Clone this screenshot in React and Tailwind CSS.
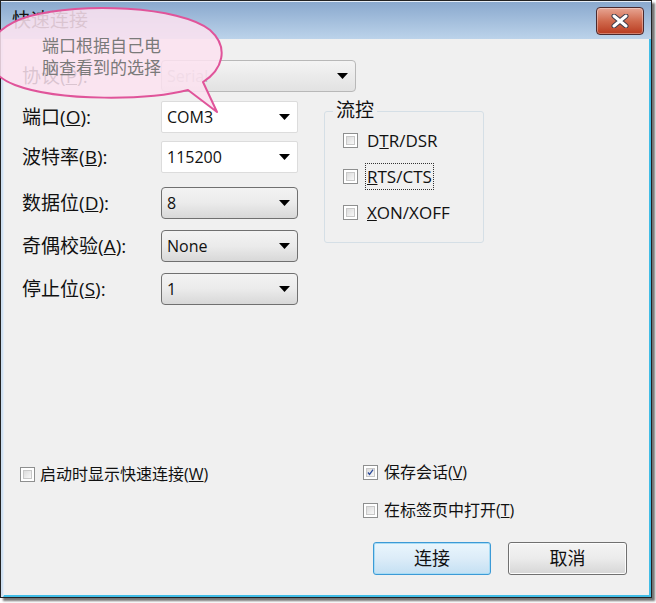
import React from 'react';

const FONT = { fontFamily: '"Open Sans", "Noto Sans CJK SC", sans-serif' };

function Arrow() {
  return (
    <svg width="11" height="6" viewBox="0 0 11 6" className="shrink-0">
      <path d="M0 0h11L5.5 6z" fill="#000" />
    </svg>
  );
}

function Combo({ value, variant = 'button', width = 'w-[137px]' }) {
  const styles = {
    edit: 'bg-white border border-[#dcdcdc] rounded-[2px] text-[#111]',
    button: 'bg-gradient-to-b from-[#f3f3f3] via-[#ebebeb] to-[#d8d8d8] border border-[#707070] rounded-[4px] text-[#111]',
    disabled: 'bg-gradient-to-b from-[#f4f4f4] to-[#e2e2e2] border border-[#b8b8b8] rounded-[4px] text-[#b0b0b0]',
  };
  return (
    <div className={`${width} h-[32px] flex items-center justify-between pl-[5px] pr-[7px] text-[16px] ${styles[variant]}`}>
      <span>{value}</span>
      <Arrow />
    </div>
  );
}

function Label({ text, hot, className = '' }) {
  return (
    <span className={`text-[19px] leading-[26px] text-[#111] ${className}`}>
      {text}(<span className="underline">{hot}</span>):
    </span>
  );
}

function CheckBox({ checked }) {
  return (
    <div className="w-[15px] h-[15px] border border-[#8e8f8f] bg-white p-[2px] shrink-0">
      <div className="w-full h-full bg-gradient-to-br from-[#dcdcdc] to-[#f8f8f8] border border-[#c8c8c8] flex items-center justify-center">
        {checked && (
          <svg width="11" height="11" viewBox="0 0 11 11">
            <path d="M1.5 5.5l2.5 3 5.5-7.5" stroke="#2c4a9a" strokeWidth="2" fill="none" />
          </svg>
        )}
      </div>
    </div>
  );
}

function Row({ label, hot, value, variant, mt }) {
  return (
    <div className={`flex items-center ${mt}`}>
      <Label text={label} hot={hot} className="w-[139px]" />
      <Combo value={value} variant={variant} />
    </div>
  );
}

export default function App() {
  return (
    <div className="relative w-[656px] h-[603px] bg-white" style={FONT}>
      <div className="w-[652px] h-[598px] border border-[#222] flex flex-col shadow-[3px_3px_2px_rgba(0,0,0,0.55)] bg-[#cfe0f1]">
        {/* title bar */}
        <div className="h-[38px] flex items-center justify-between pl-[11px] pr-[7px] bg-gradient-to-b from-[#8aa9ce] to-[#bcd3ea] border-t border-[#e6eef7]">
          <span className="text-[19px] text-[#111]">快速连接</span>
          <div className="w-[48px] h-[28px] rounded-[4px] border border-[#4b2a2e] bg-gradient-to-b from-[#e7a593] via-[#d06a4e] to-[#b8391d] flex items-center justify-center shadow-[inset_0_0_0_1px_rgba(255,255,255,0.35)]">
            <svg width="20" height="14" viewBox="0 0 20 14">
              <path d="M4 2l12 10M16 2L4 12" stroke="#3b3b4a" strokeWidth="5" strokeLinecap="round" />
              <path d="M4 2l12 10M16 2L4 12" stroke="#fff" strokeWidth="3" strokeLinecap="round" />
            </svg>
          </div>
        </div>

        {/* client area */}
        <div className="flex-1 bg-[#f0f0f0] ml-[2px] border-l border-[#e2ecf6] border-r-2 border-b-2 border-r-[#41bde6] border-b-[#41bde6] flex flex-col pl-[18px] pr-[22px] pt-[21px] pb-[20px]">
          <div className="flex items-center">
            <Label text="协议" hot="P" className="w-[139px]" />
            <Combo value="Serial" variant="disabled" width="w-[195px]" />
          </div>

          <div className="flex">
            <div className="flex flex-col">
              <Row label="端口" hot="O" value="COM3" variant="edit" mt="mt-[9px]" />
              <Row label="波特率" hot="B" value="115200" variant="edit" mt="mt-[8px]" />
              <Row label="数据位" hot="D" value="8" variant="button" mt="mt-[14px]" />
              <Row label="奇偶校验" hot="A" value="None" variant="button" mt="mt-[11px]" />
              <Row label="停止位" hot="S" value="1" variant="button" mt="mt-[11px]" />
            </div>

            <div className="relative ml-[26px] mt-[19px] w-[160px] h-[132px] border border-[#d5dfe6] rounded-[3px] pl-[18px] pt-[21px]">
              <span className="absolute -top-[14px] left-[8px] px-[3px] bg-[#f0f0f0] text-[19px] text-[#111] leading-[24px]">流控</span>
              <div className="flex flex-col gap-[21px] text-[17px] text-[#111]">
                <div className="flex items-center gap-[9px] h-[15px]">
                  <CheckBox />
                  <span>D<span className="underline">T</span>R/DSR</span>
                </div>
                <div className="flex items-center gap-[8px] h-[15px]">
                  <CheckBox />
                  <span className="outline outline-1 outline-dotted outline-[#333] px-[1px]"><span className="underline">R</span>TS/CTS</span>
                </div>
                <div className="flex items-center gap-[9px] h-[15px]">
                  <CheckBox />
                  <span><span className="underline">X</span>ON/XOFF</span>
                </div>
              </div>
            </div>
          </div>

          <div className="flex-1" />

          <div className="flex">
            <div className="w-[343px] flex items-start pt-[2px] -ml-[2px]">
              <div className="flex items-center gap-[5px] text-[16px] text-[#111]">
                <CheckBox />
                <span>启动时显示快速连接(<span className="underline">W</span>)</span>
              </div>
            </div>
            <div className="flex flex-col">
              <div className="flex items-center gap-[6px] text-[16px] text-[#111]">
                <CheckBox checked />
                <span>保存会话(<span className="underline">V</span>)</span>
              </div>
              <div className="flex items-center gap-[6px] text-[16px] text-[#111] mt-[14px]">
                <CheckBox />
                <span>在标签页中打开(<span className="underline">T</span>)</span>
              </div>
              <div className="flex gap-[17px] mt-[20px] ml-[10px]">
                <button className="w-[118px] h-[33px] rounded-[3px] border border-[#3c9ad6] bg-gradient-to-b from-[#eaf6fd] via-[#dcecf8] to-[#c4e0f3] text-[18px] text-[#111] shadow-[inset_0_0_0_1px_#a8dcf5]">连接</button>
                <button className="w-[119px] h-[33px] rounded-[3px] border border-[#707070] bg-gradient-to-b from-[#f4f4f4] via-[#ebebeb] to-[#d6d6d6] text-[18px] text-[#111] shadow-[inset_0_0_0_1px_#fcfcfc]">取消</button>
              </div>
            </div>
          </div>
        </div>
      </div>

      {/* callout bubble */}
      <div className="absolute left-0 top-0 pointer-events-none">
        <svg width="230" height="120" viewBox="0 0 230 120" className="absolute left-0 top-0">
          <path
            d="M188 90 C 150 100, 60 102, 15 85 C -25 70, -20 30, 30 16 C 80 2, 180 6, 210 30 C 230 48, 222 70, 203 82 L 217 112 Z"
            fill="rgba(251,226,240,0.86)"
            stroke="#e0549a"
            strokeWidth="2"
            strokeLinejoin="round"
          />
        </svg>
        <div className="absolute left-[42px] top-[35px] w-[150px] text-[17px] leading-[22px] text-[#7a7a7a]">
          端口根据自己电
          <br />
          脑查看到的选择
        </div>
      </div>
    </div>
  );
}
